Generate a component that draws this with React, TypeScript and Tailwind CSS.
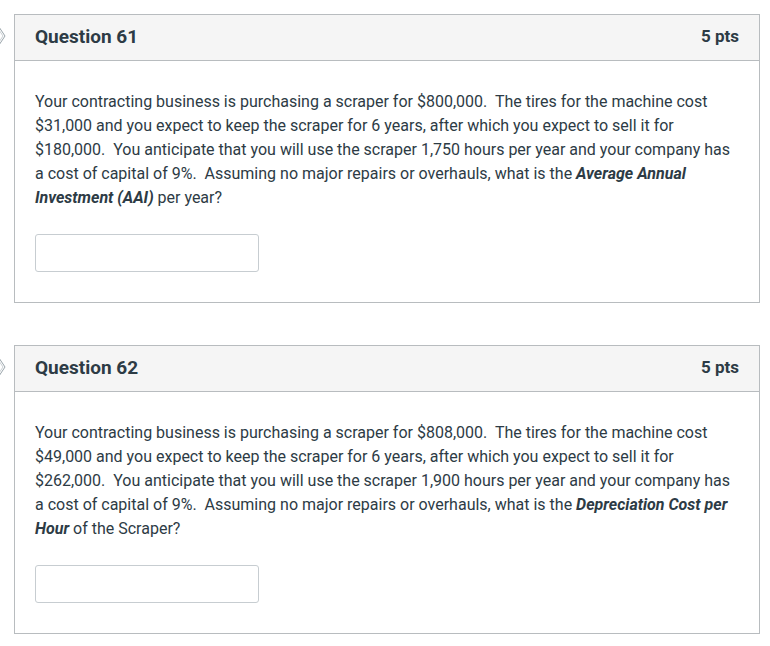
import React from 'react';

interface QuestionProps {
  title: string;
  points: string;
  children: React.ReactNode;
}

const Chevron = () => (
  <svg width="14" height="46" viewBox="0 0 14 46" className="shrink-0">
    <polyline points="-1,13 5,22 -1,31" fill="none" stroke="#9aa4ab" strokeWidth="1" />
    <polyline points="-3,13 3,22 -3,31" fill="none" stroke="#c9cfd3" strokeWidth="1" />
  </svg>
);

const Question: React.FC<QuestionProps> = ({ title, points, children }) => (
  <div className="flex">
    <Chevron />
    <div className="w-[746px] border border-[#b8bcbf] bg-white">
      {/* Header */}
      <div className="h-[46px] flex items-center justify-between px-5 bg-[#f5f5f5] border-b border-[#b8bcbf]">
        <span className="text-[19px] font-bold text-[#2d3b45] -mt-[1px]">{title}</span>
        <span className="text-[17px] font-bold text-[#2d3b45] -mt-[1px]">{points}</span>
      </div>
      {/* Body */}
      <div className="pl-5 pr-5 pt-[29px] pb-[30px]">
        <p className="text-[16px] leading-[24px] text-[#2d3b45] pr-1">{children}</p>
        <div className="mt-[24px] w-[224px] h-[38px] border border-[#c7cdd1] rounded-[3px] bg-white"></div>
      </div>
    </div>
  </div>
);

export default function App() {
  return (
    <div className="min-h-screen bg-white pt-[14px] flex flex-col gap-[42px] font-['Roboto',sans-serif]">
      <Question title="Question 61" points="5 pts">
        Your contracting business is purchasing a scraper for $800,000.&nbsp; The tires for the machine cost $31,000 and you expect to keep the scraper for 6 years, after which you expect to sell it for $180,000.&nbsp; You anticipate that you will use the scraper 1,750 hours per year and your company has a cost of capital of 9%.&nbsp; Assuming no major repairs or overhauls, what is the{' '}
        <strong><em>Average Annual Investment (AAI)</em></strong> per year?
      </Question>
      <Question title="Question 62" points="5 pts">
        Your contracting business is purchasing a scraper for $808,000.&nbsp; The tires for the machine cost $49,000 and you expect to keep the scraper for 6 years, after which you expect to sell it for $262,000.&nbsp; You anticipate that you will use the scraper 1,900 hours per year and your company has a cost of capital of 9%.&nbsp; Assuming no major repairs or overhauls, what is the{' '}
        <strong><em>Depreciation Cost per Hour</em></strong> of the Scraper?
      </Question>
    </div>
  );
}
